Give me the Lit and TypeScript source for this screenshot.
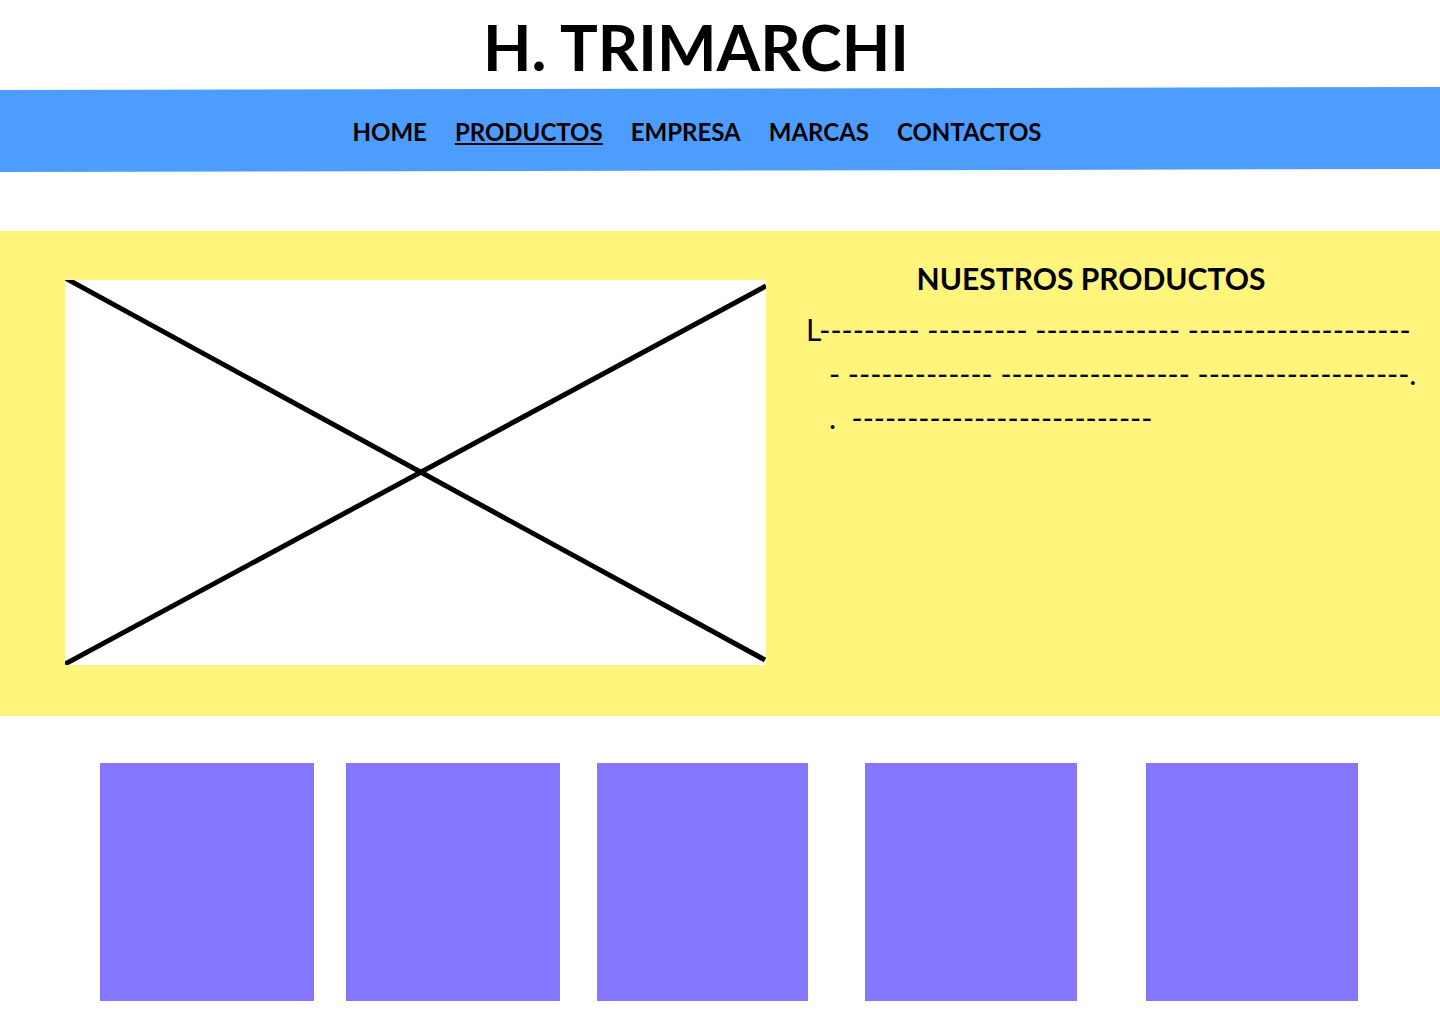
import { LitElement, html, css } from "lit";
import { customElement } from "lit/decorators.js";

const NAV = [
  { label: "HOME", id: "home" },
  { label: "PRODUCTOS", id: "productos", current: true },
  { label: "EMPRESA", id: "empresa" },
  { label: "MARCAS", id: "marcas" },
  { label: "CONTACTOS", id: "contactos" },
];

const dashes = (...groups: number[]) => groups.map((n) => "-".repeat(n)).join(" ");

const LINES = [
  "L" + dashes(9, 9, 13, 20),
  "   " + dashes(1, 13, 17, 19) + ".",
  "   .  " + dashes(27),
];

@customElement("app-root")
export class AppRoot extends LitElement {
  static styles = css`
    :host {
      display: block;
      min-height: 100vh;
      background: #fff;
      color: #000;
      font-family: Lato, "Liberation Sans", sans-serif;
    }
    .title {
      margin: 0;
      padding-right: 48px;
      height: 87px;
      line-height: 94px;
      text-align: center;
      font-size: 63px;
      font-weight: 700;
      box-sizing: border-box;
    }
    .nav {
      background: #4d9dff;
      clip-path: polygon(0 3px, 100% 0, 100% calc(100% - 3px), 0 100%);
      padding: 29px 46px 24px 0;
    }
    .menu {
      display: flex;
      justify-content: center;
      gap: 28px;
      margin: 0;
      padding: 0;
      list-style: none;
      font-size: 24px;
      line-height: 32px;
      font-weight: 700;
    }
    .link {
      color: inherit;
      text-decoration: none;
    }
    .current {
      text-decoration: underline;
      text-decoration-thickness: 2px;
      text-underline-offset: 2px;
      text-decoration-skip-ink: none;
    }
    .intro {
      display: grid;
      grid-template-columns:
        minmax(0, 65fr) minmax(0, 701fr) minmax(0, 40fr) minmax(0, 634fr);
      margin-top: 59px;
      padding: 49px 0 51px;
      background: #fff47c;
    }
    .picture {
      grid-column: 2;
      display: block;
      width: 100%;
      height: auto;
      background: #fff;
    }
    .copy {
      grid-column: 4;
      margin-top: -26px;
    }
    .heading {
      margin: 0;
      padding-right: 64px;
      text-align: center;
      font-size: 30px;
      line-height: 48px;
      font-weight: 700;
    }
    .text {
      margin: 5px 0 0;
      font-size: 30px;
      line-height: 44px;
      white-space: pre;
    }
    .tiles {
      display: grid;
      grid-template-columns: 100fr 214fr 32fr 214fr 37fr 211fr 57fr 212fr 69fr 212fr 82fr;
      margin: 0;
      padding: 47px 0 23px;
      list-style: none;
    }
    .tile {
      height: 238px;
      background: #8577ff;
    }
    .tile:nth-child(1) { grid-column: 2; }
    .tile:nth-child(2) { grid-column: 4; }
    .tile:nth-child(3) { grid-column: 6; }
    .tile:nth-child(4) { grid-column: 8; }
    .tile:nth-child(5) { grid-column: 10; }
  `;

  render() {
    return html`
      <header>
        <h1 class="title">H. TRIMARCHI</h1>
        <nav class="nav">
          <ul class="menu">
            ${NAV.map(
              (item) => html`<li><a class="link ${item.current ? "current" : ""}" href="#${item.id}">${item.label}</a></li>`
            )}
          </ul>
        </nav>
      </header>
      <main>
        <section class="intro">
          <svg class="picture" viewBox="0 0 701 385" aria-hidden="true">
            <path d="M0 -2 L700 380 M0 384 L701 6" fill="none" stroke="#000" stroke-width="5" />
          </svg>
          <div class="copy">
            <h2 class="heading">NUESTROS PRODUCTOS</h2>
            <p class="text">${LINES.join("\n")}</p>
          </div>
        </section>
        <ul class="tiles">
          ${[1, 2, 3, 4, 5].map(() => html`<li class="tile"></li>`)}
        </ul>
      </main>
    `;
  }
}
